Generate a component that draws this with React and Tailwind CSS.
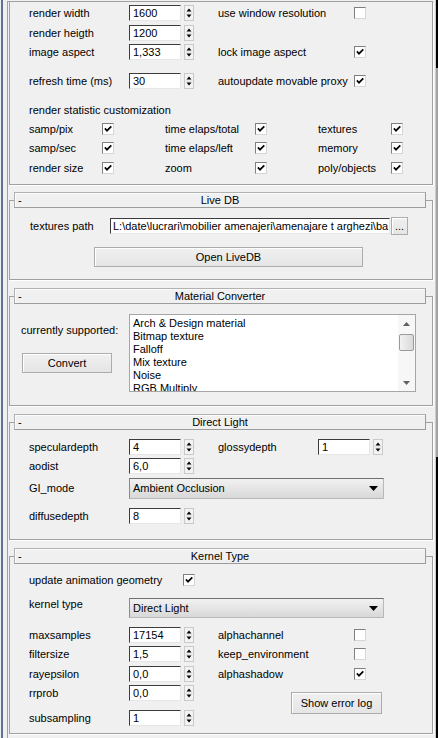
import React from "react";

function Check({ checked }) {
  return (
    <div className="w-[12px] h-[12px] shrink-0 bg-white border border-[#d6d6d6] border-t-[#7f7f7f] border-l-[#7f7f7f] flex items-center justify-center">
      {checked && (
        <svg width="10" height="10" viewBox="0 0 10 10">
          <path d="M1.9 4.4 L4 6.7 L8.3 2.3" fill="none" stroke="#000" strokeWidth="1.7" />
        </svg>
      )}
    </div>
  );
}

function Arrows() {
  return (
    <svg width="10" height="16" viewBox="0 0 10 16" className="ml-[3px] shrink-0">
      <rect x="0.5" y="0.5" width="9" height="15" fill="#f3f3f3" stroke="#c9c9c9" />
      <line x1="1" y1="8" x2="9" y2="8" stroke="#dedede" />
      <path d="M2.5 6.5 L7.5 6.5 L5 3.5 Z" fill="#000" />
      <path d="M2.5 9.5 L7.5 9.5 L5 12.5 Z" fill="#000" />
    </svg>
  );
}

function Spinner({ value }) {
  return (
    <div className="flex items-center shrink-0">
      <div className="w-[52px] h-[16px] bg-white border border-[#e6e6e6] border-t-[#3c3c3c] border-l-[#3c3c3c] pl-[3px] flex items-center leading-none">
        {value}
      </div>
      <Arrows />
    </div>
  );
}

function Dropdown({ value, h }) {
  return (
    <div
      className={`w-[255px] ${h} shrink-0 border border-[#b8b8b8] border-t-[#6f6f6f] border-l-[#8a8a8a] bg-gradient-to-b from-[#f2f2f2] to-[#d8d8d8] flex items-center justify-between pl-[3px] pr-[5px] leading-none`}
    >
      <span>{value}</span>
      <svg width="9" height="5" viewBox="0 0 9 5">
        <path d="M0 0 L9 0 L4.5 5 Z" fill="#000" />
      </svg>
    </div>
  );
}

function Button({ className, children }) {
  return (
    <div
      className={`${className} shrink-0 border border-[#acacac] bg-gradient-to-b from-[#f0f0f0] to-[#e5e5e5] shadow-[inset_1px_1px_0_#ffffff] flex items-center justify-center leading-none`}
    >
      {children}
    </div>
  );
}

function Rollout({ title, children, bodyClass, mt = "mt-[8px]" }) {
  return (
    <div className={mt}>
      <div className="relative z-10 ml-[5px] mr-[7px] h-[16px] border border-[#b1b1b1] border-r-[#9c9c9c] border-b-[#9c9c9c] bg-[#f0f0f0] shadow-[inset_1px_1px_0_#fbfbfb] flex items-center leading-none">
        <span className="w-[14px] pl-[3px] shrink-0">-</span>
        <span className="flex-1 text-center pr-[14px]">{title}</span>
      </div>
      <div className={`-mt-[8px] border border-[#a0a0a0] shadow-[1px_1px_0_#ffffff] ${bodyClass}`}>
        {children}
      </div>
    </div>
  );
}

function Row({ className = "", children }) {
  return <div className={`flex items-center h-[16px] ${className}`}>{children}</div>;
}

export default function App() {
  return (
    <div className="w-[438px] h-[738px] overflow-hidden bg-[#f0f0f0] flex text-[11px] leading-none text-black font-['Liberation_Sans',Arial,sans-serif]">
      <div className="w-[1px] shrink-0" />
      <div className="w-[2px] shrink-0 bg-[#5a7396]" />
      <div className="w-[432px] shrink-0 pl-[4px] pr-[2px]">
        <div className="h-[740px] mt-[1px] border-l border-t border-[#a0a0a0] pl-[1px]">
          {/* Top (scrolled) rollout */}
          <div className="border-l border-r border-b border-[#a0a0a0] shadow-[1px_1px_0_#ffffff] pl-[19px] pt-[3px] pb-[8px]">
            <Row>
              <span className="w-[100px] shrink-0">render width</span>
              <Spinner value="1600" />
              <span className="ml-[24px] w-[136px] shrink-0">use window resolution</span>
              <Check />
            </Row>
            <Row className="mt-[4px]">
              <span className="w-[100px] shrink-0">render heigth</span>
              <Spinner value="1200" />
            </Row>
            <Row className="mt-[3px]">
              <span className="w-[100px] shrink-0">image aspect</span>
              <Spinner value="1,333" />
              <span className="ml-[24px] w-[136px] shrink-0">lock image aspect</span>
              <Check checked />
            </Row>
            <Row className="mt-[13px]">
              <span className="w-[100px] shrink-0">refresh time (ms)</span>
              <Spinner value="30" />
              <span className="ml-[24px] w-[136px] shrink-0">autoupdate movable proxy</span>
              <Check checked />
            </Row>
            <Row className="mt-[13px]">
              <span>render statistic customization</span>
            </Row>
            {[
              ["samp/pix", "time elaps/total", "textures"],
              ["samp/sec", "time elaps/left", "memory"],
              ["render size", "zoom", "poly/objects"],
            ].map((r, i) => (
              <Row key={i} className={i === 2 ? "mt-[4px]" : "mt-[3px]"}>
                <span className="w-[73px] shrink-0">{r[0]}</span>
                <Check checked />
                <span className="ml-[51px] w-[90px] shrink-0">{r[1]}</span>
                <Check checked />
                <span className="ml-[51px] w-[73px] shrink-0">{r[2]}</span>
                <Check checked />
              </Row>
            ))}
          </div>

          {/* Live DB */}
          <Rollout title="Live DB" mt="mt-[7px]" bodyClass="pt-[16px] pb-[12px]">
            <div className="flex items-center h-[18px] pl-[20px]">
              <span className="w-[80px] shrink-0">textures path</span>
              <div className="w-[280px] h-[16px] shrink-0 bg-white border border-[#e6e6e6] border-t-[#3c3c3c] border-l-[#3c3c3c] pl-[2px] flex items-center overflow-hidden whitespace-nowrap leading-none">
                L:\date\lucrari\mobilier amenajeri\amenajare t arghezi\ba
              </div>
              <Button className="ml-[1px] w-[17px] h-[18px]">...</Button>
            </div>
            <Button className="mt-[12px] ml-[84px] w-[269px] h-[20px]">Open LiveDB</Button>
          </Rollout>

          {/* Material Converter */}
          <Rollout title="Material Converter" bodyClass="pt-[17px] pb-[13px] pl-[11px] flex">
            <div className="w-[108px] shrink-0 flex flex-col">
              <span className="mt-[11px] h-[13px]">currently supported:</span>
              <Button className="mt-[15px] ml-[1px] w-[90px] h-[20px]">Convert</Button>
            </div>
            <div className="w-[287px] h-[78px] shrink-0 bg-white border border-[#a6a6a6] flex overflow-hidden">
              <div className="flex-1 pt-[2px] pl-[3px] leading-[13px] whitespace-nowrap">
                <div>Arch &amp; Design material</div>
                <div>Bitmap texture</div>
                <div>Falloff</div>
                <div>Mix texture</div>
                <div>Noise</div>
                <div>RGB Multiply</div>
              </div>
              <div className="w-[17px] shrink-0 bg-[#f7f7f7] flex flex-col items-center">
                <div className="h-[17px] flex items-center justify-center">
                  <svg width="7" height="4" viewBox="0 0 7 4"><path d="M0 4 L7 4 L3.5 0 Z" fill="#606060" /></svg>
                </div>
                <div className="mt-[2px] w-[15px] h-[17px] border border-[#9a9a9a] rounded-[2px] bg-gradient-to-r from-[#f2f2f2] to-[#d9d9d9]" />
                <div className="flex-1" />
                <div className="h-[17px] flex items-center justify-center">
                  <svg width="7" height="4" viewBox="0 0 7 4"><path d="M0 0 L7 0 L3.5 4 Z" fill="#606060" /></svg>
                </div>
              </div>
            </div>
          </Rollout>

          {/* Direct Light */}
          <Rollout title="Direct Light" bodyClass="pt-[16px] pb-[15px] pl-[19px]">
            <Row>
              <span className="w-[100px] shrink-0">speculardepth</span>
              <Spinner value="4" />
              <span className="ml-[24px] w-[100px] shrink-0">glossydepth</span>
              <Spinner value="1" />
            </Row>
            <Row className="mt-[3px]">
              <span className="w-[100px] shrink-0">aodist</span>
              <Spinner value="6,0" />
            </Row>
            <div className="mt-[4px] flex items-center h-[21px]">
              <span className="w-[100px] shrink-0">GI_mode</span>
              <Dropdown value="Ambient Occlusion" h="h-[21px]" />
            </div>
            <Row className="mt-[9px]">
              <span className="w-[100px] shrink-0">diffusedepth</span>
              <Spinner value="8" />
            </Row>
          </Rollout>

          {/* Kernel Type */}
          <Rollout title="Kernel Type" bodyClass="pt-[16px] pb-[7px] pl-[19px]">
            <div className="flex items-center h-[14px]">
              <span className="w-[154px] shrink-0">update animation geometry</span>
              <Check checked />
            </div>
            <div className="mt-[11px] flex items-start h-[20px]">
              <span className="w-[100px] shrink-0 leading-[12px]">kernel type</span>
              <Dropdown value="Direct Light" h="h-[20px]" />
            </div>
            <div className="mt-[9px] flex">
              <div className="flex flex-col">
                <Row>
                  <span className="w-[100px] shrink-0">maxsamples</span>
                  <Spinner value="17154" />
                </Row>
                <Row className="mt-[3px]">
                  <span className="w-[100px] shrink-0">filtersize</span>
                  <Spinner value="1,5" />
                </Row>
                <Row className="mt-[4px]">
                  <span className="w-[100px] shrink-0">rayepsilon</span>
                  <Spinner value="0,0" />
                </Row>
                <Row className="mt-[3px]">
                  <span className="w-[100px] shrink-0">rrprob</span>
                  <Spinner value="0,0" />
                </Row>
                <Row className="mt-[9px]">
                  <span className="w-[100px] shrink-0">subsampling</span>
                  <Spinner value="1" />
                </Row>
              </div>
              <div className="ml-[24px] flex flex-col">
                <Row>
                  <span className="w-[136px] shrink-0">alphachannel</span>
                  <Check />
                </Row>
                <Row className="mt-[3px]">
                  <span className="w-[136px] shrink-0">keep_environment</span>
                  <Check />
                </Row>
                <Row className="mt-[4px]">
                  <span className="w-[136px] shrink-0">alphashadow</span>
                  <Check checked />
                </Row>
                <Button className="mt-[10px] ml-[73px] w-[91px] h-[22px]">Show error log</Button>
              </div>
            </div>
          </Rollout>
        </div>
      </div>
      <div className="w-[1px] shrink-0 bg-[#cdcdcd]" />
      <div className="w-[2px] shrink-0 flex flex-col">
        <div className="h-[68px] bg-black" />
        <div className="h-[389px] bg-[#a3a3a3]" />
        <div className="flex-1 bg-black" />
      </div>
    </div>
  );
}
